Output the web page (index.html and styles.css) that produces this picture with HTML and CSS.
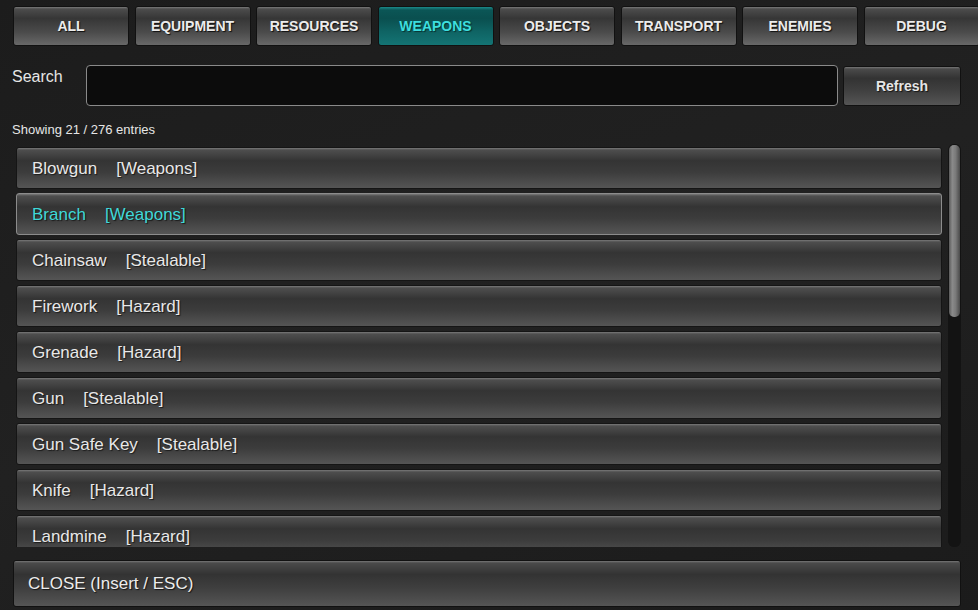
FILE: index.html
```html
<!DOCTYPE html>
<html>
<head>
    <meta charset="UTF-8">
    <title>Spawn Menu</title>
    <link rel="stylesheet" href="styles.css">
</head>
<body>

<div class="tabs">
    <div class="tab">ALL</div>
    <div class="tab">EQUIPMENT</div>
    <div class="tab">RESOURCES</div>
    <div class="tab active">WEAPONS</div>
    <div class="tab">OBJECTS</div>
    <div class="tab">TRANSPORT</div>
    <div class="tab">ENEMIES</div>
    <div class="tab">DEBUG</div>
</div>

<div class="search-row">
    <span class="search-label">Search</span>
    <input class="search-field" type="text" spellcheck="false" autocomplete="off">
    <div class="btn refresh">Refresh</div>
</div>

<div class="count">Showing 21 / 276 entries</div>

<div class="list-wrap">
    <div class="list">
        <div class="row"><span class="name">Blowgun</span><span class="cat">[Weapons]</span></div>
        <div class="row selected"><span class="name">Branch</span><span class="cat">[Weapons]</span></div>
        <div class="row"><span class="name">Chainsaw</span><span class="cat">[Stealable]</span></div>
        <div class="row"><span class="name">Firework</span><span class="cat">[Hazard]</span></div>
        <div class="row"><span class="name">Grenade</span><span class="cat">[Hazard]</span></div>
        <div class="row"><span class="name">Gun</span><span class="cat">[Stealable]</span></div>
        <div class="row"><span class="name">Gun Safe Key</span><span class="cat">[Stealable]</span></div>
        <div class="row"><span class="name">Knife</span><span class="cat">[Hazard]</span></div>
        <div class="row"><span class="name">Landmine</span><span class="cat">[Hazard]</span></div>
    </div>
    <div class="scrollbar">
        <div class="thumb"></div>
    </div>
</div>

<div class="btn close-btn"><span>CLOSE (Insert / ESC)</span></div>

</body>
</html>
```

FILE: styles.css
```css
html, body {
    margin: 0;
    height: 100%;
}

body {
    width: 978px;
    height: 610px;
    overflow: hidden;
    font-family: "Liberation Sans", Arial, Helvetica, sans-serif;
    color: #e6e6e6;
    background: linear-gradient(160deg, #1c1c1c 0%, #212121 50%, #1b1b1b 100%);
}

.tabs {
    display: flex;
    gap: 5.5px;
    padding: 6px 0 0 13px;
    width: 1000px;
}

.tab {
    flex: none;
    width: 116px;
    height: 40px;
    box-sizing: border-box;
    border: 1px solid #111;
    border-radius: 3px;
    background: linear-gradient(#7a7a7a 0, #4c4c4c 2px, #363636 30%, #4a4a4a 65%, #686868 100%);
    display: flex;
    align-items: center;
    justify-content: center;
    font-size: 14px;
    font-weight: bold;
    color: #ececec;
    text-shadow: 1px 1px 1px rgba(0, 0, 0, 0.8);
}

.tab.active {
    background: linear-gradient(#1b8a8a 0, #0b5656 3px, #0a4f4f 30%, #0f6464 65%, #147474 100%);
    color: #3ddede;
    text-shadow: 1px 1px 1px rgba(0, 0, 0, 0.5);
}

.search-row {
    display: flex;
    align-items: center;
    margin-top: 19px;
    padding-left: 12px;
}

.search-label {
    width: 74px;
    font-size: 16px;
    margin-top: -18px;
}

.search-field {
    width: 752px;
    height: 41px;
    box-sizing: border-box;
    background: #0c0c0c;
    border: 1px solid #8a8a8a;
    border-radius: 4px;
    outline: none;
    color: #e6e6e6;
    font-size: 16px;
    padding: 0 8px;
}

.btn {
    box-sizing: border-box;
    border: 1px solid #111;
    border-radius: 3px;
    background: linear-gradient(#777 0, #4a4a4a 2px, #333 30%, #3f3f3f 60%, #555 100%);
    text-shadow: 1px 1px 1px rgba(0, 0, 0, 0.7);
}

.refresh {
    margin-left: 5px;
    width: 118px;
    height: 40px;
    display: flex;
    align-items: center;
    justify-content: center;
    font-size: 14px;
    font-weight: bold;
}

.count {
    font-size: 13px;
    padding-left: 12px;
    margin-top: 16px;
    height: 22px;
}

.list-wrap {
    display: flex;
    height: 403px;
    padding-left: 16px;
}

.list {
    width: 926px;
    overflow: hidden;
    padding-top: 3px;
    box-sizing: border-box;
}

.row {
    height: 42px;
    box-sizing: border-box;
    margin-bottom: 4px;
    border: 1px solid #151515;
    border-radius: 3px;
    background: linear-gradient(#7a7a7a 0, #4e4e4e 2px, #343434 32%, #3c3c3c 60%, #555 100%);
    display: flex;
    align-items: center;
    padding: 2px 0 0 15px;
    font-size: 17px;
    color: #e8e8e8;
    text-shadow: 1px 1px 1px rgba(0, 0, 0, 0.6);
}

.row.selected {
    border-color: #8c8c8c;
    color: #3fd8d8;
}

.cat {
    margin-left: 19px;
}

.scrollbar {
    margin-left: 6px;
    width: 13px;
    height: 403px;
    background: #131313;
    border-radius: 6px;
    padding: 1px;
    box-sizing: border-box;
}

.thumb {
    height: 172px;
    border-radius: 5px;
    background: linear-gradient(90deg, #5a5a5a 0, #8a8a8a 30%, #7a7a7a 60%, #4a4a4a 100%);
}

.close-btn {
    margin: 13px 0 0 13px;
    width: 948px;
    height: 47px;
    display: flex;
    align-items: center;
    padding-left: 14px;
    font-size: 17px;
    color: #ececec;
}
```
